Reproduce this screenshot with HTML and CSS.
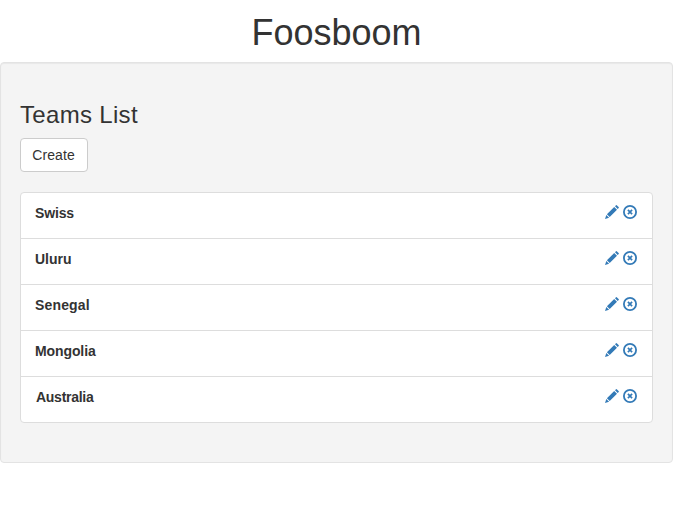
FILE: index.html
```html
<!DOCTYPE html>
<html lang="en">
<head>
<meta charset="utf-8">
<title>Foosboom</title>
<link rel="stylesheet" href="styles.css">
</head>
<body>
<svg class="sprite" aria-hidden="true">
  <symbol id="pencil" viewBox="0 0 14 14">
    <path d="M0 14 1.300 9.900 4.100 12.700ZM1.900 9.300 9.200 2 12 4.800 4.700 12.100ZM10 1.300 11 .3Q11.500-.1 12 .4L13.600 2Q14.100 2.500 13.700 3L12.700 4Z"/>
  </symbol>
  <symbol id="remove" viewBox="0 0 14 14">
    <circle cx="7" cy="7" r="6.100" fill="none" stroke="currentColor" stroke-width="1.800"/>
    <path d="M4.900 4.900 9.100 9.100M9.100 4.900 4.900 9.100" stroke="currentColor" stroke-width="1.700"/>
  </symbol>
</svg>
<h1 class="title">Foosboom</h1>
<main class="well">
  <h3 class="heading">Teams List</h3>
  <button class="btn" type="button">Create</button>
  <ul class="teams">
    <li class="team"><strong class="name swiss">Swiss</strong><span class="actions"><svg class="icon"><use href="#pencil"/></svg><svg class="icon"><use href="#remove"/></svg></span></li>
    <li class="team"><strong class="name uluru">Uluru</strong><span class="actions"><svg class="icon"><use href="#pencil"/></svg><svg class="icon"><use href="#remove"/></svg></span></li>
    <li class="team"><strong class="name senegal">Senegal</strong><span class="actions"><svg class="icon"><use href="#pencil"/></svg><svg class="icon"><use href="#remove"/></svg></span></li>
    <li class="team"><strong class="name mongolia">Mongolia</strong><span class="actions"><svg class="icon"><use href="#pencil"/></svg><svg class="icon"><use href="#remove"/></svg></span></li>
    <li class="team"><strong class="name australia">Australia</strong><span class="actions"><svg class="icon"><use href="#pencil"/></svg><svg class="icon"><use href="#remove"/></svg></span></li>
  </ul>
</main>
</body>
</html>
```
FILE: styles.css
```css
* { box-sizing: border-box; }
body {
  margin: 0;
  background: #fff;
  color: #333;
  font: 14px/20px "Liberation Sans", Arial, sans-serif;
}
.sprite { display: none; }
.title {
  margin: 0;
  padding-top: 13px;
  height: 62px;
  font-size: 36px;
  line-height: 40px;
  font-weight: 400;
  text-align: center;
}
.well {
  height: 401px;
  padding: 39px 19px 19px;
  background: #f4f4f4;
  border: 1px solid #e3e3e3;
  border-radius: 4px;
  box-shadow: inset 0 1px 1px rgba(0, 0, 0, .05);
}
.heading {
  margin: 0 0 10px;
  font-size: 24px;
  line-height: 26px;
  font-weight: 400;
  letter-spacing: .32px;
}
.btn {
  display: block;
  width: 68px;
  height: 34px;
  padding: 0 12px 0 11px;
  color: #333;
  background: #fff;
  border: 1px solid #ccc;
  border-radius: 4px;
  font: inherit;
  letter-spacing: .1px;
}
.teams {
  margin: 20px 0 0;
  padding: 0;
  list-style: none;
  background: #fff;
  border: 1px solid #ddd;
  border-radius: 4px;
}
.team {
  display: flex;
  justify-content: space-between;
  height: 45px;
  padding: 10px 15px 0 14px;
}
.team + .team {
  height: 46px;
  border-top: 1px solid #ddd;
}
.swiss { letter-spacing: -.15px; }
.senegal { letter-spacing: .15px; }
.mongolia { letter-spacing: -.1px; }
.australia { padding-left: 1px; letter-spacing: -.27px; }
.actions {
  display: flex;
  gap: 4px;
  padding-top: 2px;
}
.icon {
  display: block;
  width: 14px;
  height: 14px;
  color: #337ab7;
  fill: currentColor;
}
```
